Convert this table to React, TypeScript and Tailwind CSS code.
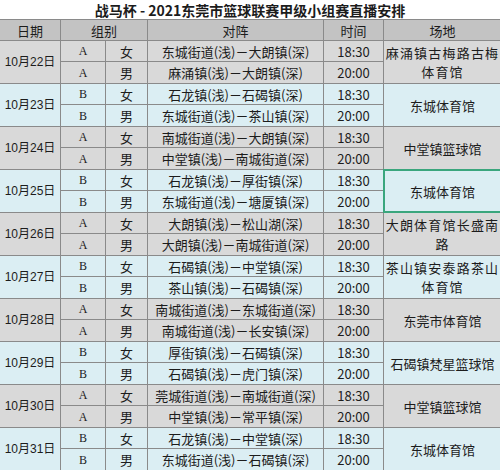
import React from "react";

type Game = { g: string; s: string; m: string; t: string };
type Day = { d: string; games: Game[]; v: string[]; cyan: boolean; sel?: boolean };

const days: Day[] = [
  { d: "10月22日", games: [{ g: "A", s: "女", m: "东城街道(浅)－大朗镇(深)", t: "18:30" }, { g: "A", s: "男", m: "麻涌镇(浅)－大朗镇(深)", t: "20:00" }], v: ["麻涌镇古梅路古梅", "体育馆"], cyan: false },
  { d: "10月23日", games: [{ g: "B", s: "女", m: "石龙镇(浅)－石碣镇(深)", t: "18:30" }, { g: "B", s: "男", m: "东城街道(浅)－茶山镇(深)", t: "20:00" }], v: ["东城体育馆"], cyan: true },
  { d: "10月24日", games: [{ g: "A", s: "女", m: "南城街道(浅)－大朗镇(深)", t: "18:30" }, { g: "A", s: "男", m: "中堂镇(浅)－南城街道(深)", t: "20:00" }], v: ["中堂镇篮球馆"], cyan: false },
  { d: "10月25日", games: [{ g: "B", s: "女", m: "石龙镇(浅)－厚街镇(深)", t: "18:30" }, { g: "B", s: "男", m: "东城街道(浅)－塘厦镇(深)", t: "20:00" }], v: ["东城体育馆"], cyan: true, sel: true },
  { d: "10月26日", games: [{ g: "A", s: "女", m: "大朗镇(浅)－松山湖(深)", t: "18:30" }, { g: "A", s: "男", m: "大朗镇(浅)－南城街道(深)", t: "20:00" }], v: ["大朗体育馆长盛南", "路"], cyan: false },
  { d: "10月27日", games: [{ g: "B", s: "女", m: "石碣镇(浅)－中堂镇(深)", t: "18:30" }, { g: "B", s: "男", m: "茶山镇(浅)－石碣镇(深)", t: "20:00" }], v: ["茶山镇安泰路茶山", "体育馆"], cyan: true },
  { d: "10月28日", games: [{ g: "A", s: "女", m: "南城街道(浅)－东城街道(深)", t: "18:30" }, { g: "A", s: "男", m: "南城街道(浅)－长安镇(深)", t: "20:00" }], v: ["东莞市体育馆"], cyan: false },
  { d: "10月29日", games: [{ g: "B", s: "女", m: "厚街镇(浅)－石碣镇(深)", t: "18:30" }, { g: "B", s: "男", m: "石碣镇(浅)－虎门镇(深)", t: "20:00" }], v: ["石碣镇梵星篮球馆"], cyan: true },
  { d: "10月30日", games: [{ g: "A", s: "女", m: "莞城街道(浅)－南城街道(深)", t: "18:30" }, { g: "A", s: "男", m: "中堂镇(浅)－常平镇(深)", t: "20:00" }], v: ["中堂镇篮球馆"], cyan: false },
  { d: "10月31日", games: [{ g: "B", s: "女", m: "石龙镇(浅)－中堂镇(深)", t: "18:30" }, { g: "B", s: "男", m: "东城街道(浅)－石碣镇(深)", t: "20:00" }], v: ["东城体育馆"], cyan: true },
];

const cjk = "font-['Noto_Sans_CJK_SC',sans-serif]";
const td = "border border-[#8a8a8a] p-0 text-center align-middle";

export default function App() {
  return (
    <div className={`w-[500px] h-[470px] overflow-hidden bg-white text-[#1c1c1c] ${cjk}`}>
      <div className="h-[19px] flex items-center justify-center text-[14px] font-bold leading-none">
        战马杯 - 2021东莞市篮球联赛甲级小组赛直播安排
      </div>
      <div className="w-[500px] overflow-hidden">
        <table className="w-[502px] -ml-px table-fixed border-collapse text-[13px] leading-none">
          <colgroup>
            <col className="w-[61px]" />
            <col className="w-[45px]" />
            <col className="w-[42px]" />
            <col className="w-[176px]" />
            <col className="w-[60px]" />
            <col className="w-[118px]" />
          </colgroup>
          <thead>
            <tr className="h-[21px] bg-[#c3c3c3]">
              <th className={`${td} font-normal`}>日期</th>
              <th className={`${td} font-normal`} colSpan={2}>组别</th>
              <th className={`${td} font-normal`}>对阵</th>
              <th className={`${td} font-normal`}>时间</th>
              <th className={`${td} font-normal`}>场地</th>
            </tr>
          </thead>
          <tbody>
            {days.map((day) =>
              day.games.map((g, i) => (
                <tr key={day.d + i} className={`${i === 0 ? "h-[21px]" : "h-[22px]"} ${day.cyan ? "bg-[#dbeef3]" : "bg-[#d9d9d9]"}`}>
                  {i === 0 && (
                    <td className={`${td} text-[12px] font-['Liberation_Sans','Noto_Sans_CJK_SC',sans-serif]`} rowSpan={2}>
                      {day.d}
                    </td>
                  )}
                  <td className={`${td} text-[12px] font-['Liberation_Serif',serif]`}>{g.g}</td>
                  <td className={td}>{g.s}</td>
                  <td className={`${td} whitespace-nowrap`}>{g.m}</td>
                  <td className={`${td} text-[13px]`}>{g.t}</td>
                  {i === 0 && (
                    <td className={`${td} relative leading-[19px]`} rowSpan={2}>
                      {day.v.map((l) => (
                        <div key={l} className={day.v.length > 1 ? "tracking-[1.2px]" : ""}>{l}</div>
                      ))}
                      {day.sel && (
                        <div className="absolute -inset-px border-2 border-[#3aa67d] pointer-events-none" />
                      )}
                    </td>
                  )}
                </tr>
              ))
            )}
          </tbody>
        </table>
      </div>
    </div>
  );
}
